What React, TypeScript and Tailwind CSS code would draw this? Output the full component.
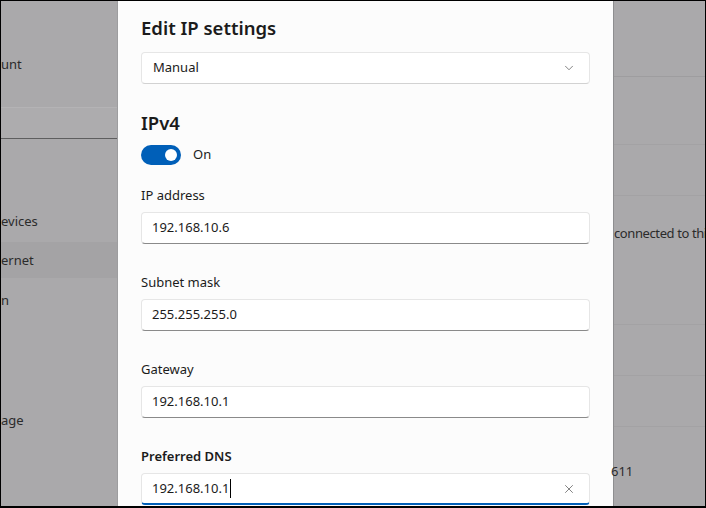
import { ChevronDown, X } from 'lucide-react';

const font = { fontFamily: '"Noto Sans", "Open Sans", sans-serif' };

function Field({ label, value, bold, focused }: { label: string; value: string; bold?: boolean; focused?: boolean }) {
  return (
    <div className="mt-[28px] first:mt-0">
      <div className={`h-[20px] leading-[20px] text-[13px] text-[#1b1b1b] ${bold ? 'font-semibold' : ''}`}>
        {label}
      </div>
      <div
        className={`mt-[7px] h-[32px] flex items-center pl-[10px] pr-[12px] rounded-[4px] bg-white border border-[#e6e6e6] ${
          focused ? 'border-b-2 border-b-[#005fb8]' : 'border-b-[#8a8a8a]'
        }`}
      >
        <span className="text-[13px] text-[#1b1b1b] flex-1 flex items-center">
          {value}
          {focused && <span className="inline-block w-px h-[19px] bg-black ml-px" />}
        </span>
        {focused && <X size={14} strokeWidth={1.3} className="text-[#5c5c5c] mr-[1px]" />}
      </div>
    </div>
  );
}

export default function App() {
  return (
    <div
      className="w-[706px] h-[508px] border-t border-l border-r border-b-2 border-black bg-[#aaa9ab] flex overflow-hidden text-[#262626]"
      style={font}
    >
      {/* Sidebar behind dialog */}
      <div className="w-[116px] shrink-0 flex flex-col text-[13px] text-[#2b2b2b]">
        <div className="h-[106px] pt-[53px] leading-[20px]">unt</div>
        <div className="h-[32px] bg-[#adacae] border-t border-[#b4b3b5] border-b border-b-[#5e5e5f]" />
        <div className="mt-[64px] h-[36px] leading-[36px]">evices</div>
        <div className="mt-[3px] h-[36px] leading-[36px] bg-[#a4a3a5]">ernet</div>
        <div className="mt-[4px] h-[36px] leading-[36px]">n</div>
        <div className="mt-[84px] h-[36px] leading-[36px]">age</div>
      </div>

      {/* Dialog */}
      <div className="w-[497px] shrink-0 bg-[#fcfcfc] border-l border-[#9d9d9f] border-r border-r-[#8e8e90] px-[23px] pt-[13px]">
        <div className="text-[18.5px] leading-[28px] font-semibold text-[#1b1b1b]">Edit IP settings</div>
        <div className="mt-[10px] h-[32px] flex items-center justify-between pl-[11px] pr-[13px] rounded-[4px] bg-white border border-[#e6e6e6] border-b-[#d2d2d2]">
          <span className="text-[13px] text-[#1b1b1b]">Manual</span>
          <ChevronDown size={14} strokeWidth={1.3} className="text-[#5c5c5c]" />
        </div>
        <div className="mt-[25px] text-[18.5px] leading-[28px] font-semibold text-[#1b1b1b]">IPv4</div>
        <div className="mt-[8px] flex items-center gap-[12px]">
          <div className="w-[40px] h-[20px] rounded-full bg-[#005fb8] flex items-center justify-end pr-[4px]">
            <div className="w-[12px] h-[12px] rounded-full bg-white" />
          </div>
          <span className="text-[13px] text-[#1b1b1b]">On</span>
        </div>
        <div className="mt-[20px]">
          <Field label="IP address" value="192.168.10.6" />
          <Field label="Subnet mask" value="255.255.255.0" />
          <Field label="Gateway" value="192.168.10.1" />
          <Field label="Preferred DNS" value="192.168.10.1" bold focused />
        </div>
      </div>

      {/* Right content behind dialog */}
      <div className="flex-1 flex flex-col text-[13px] text-[#2b2b2b]">
        <div className="h-[76px] border-b border-[#9e9d9f]" />
        <div className="h-[68px] border-b border-[#a3a2a4]" />
        <div className="h-[51px] border-b border-[#a3a2a4]" />
        <div className="h-[76px] pt-[27px] leading-[20px] whitespace-nowrap tracking-[-0.4px]">connected to this</div>
        <div className="h-[53px] border-b border-[#a3a2a4]" />
        <div className="h-[51px] border-b border-[#a3a2a4]" />
        <div className="h-[51px] border-b border-[#a3a2a4]" />
        <div className="pt-[34px] leading-[20px] -ml-[3px]">611</div>
      </div>
    </div>
  );
}
